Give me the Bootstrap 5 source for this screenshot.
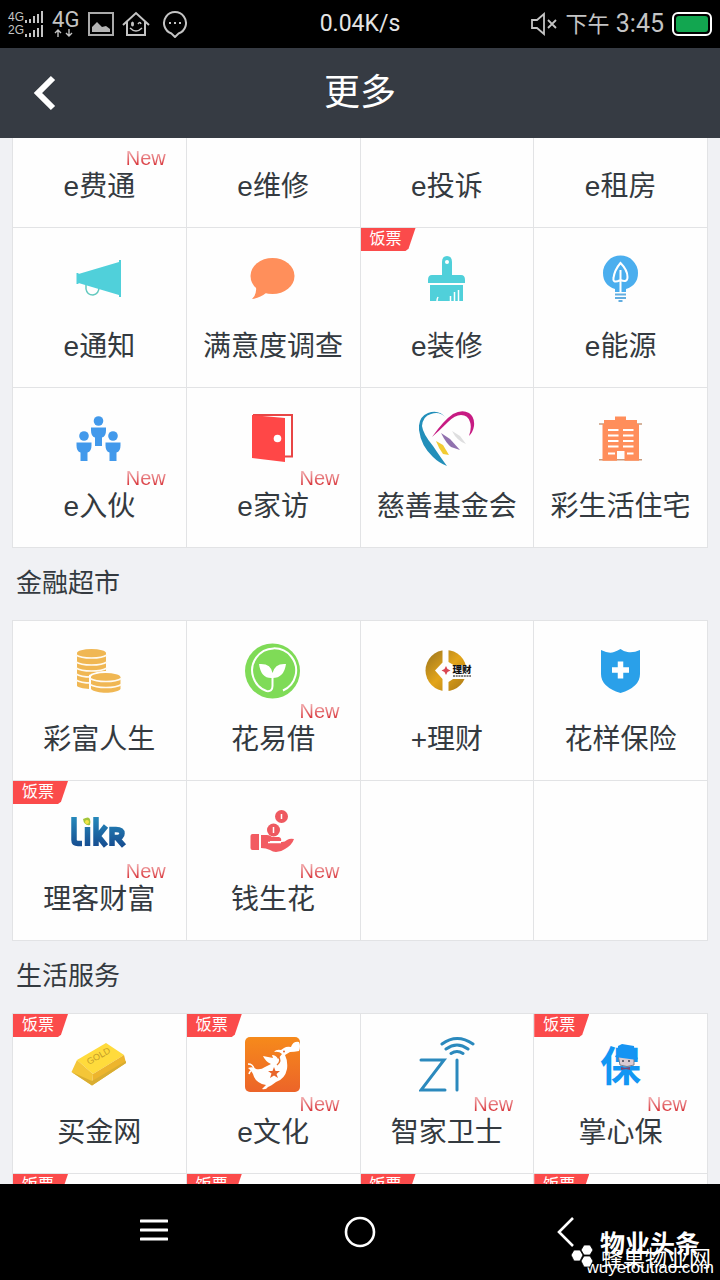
<!DOCTYPE html>
<html lang="zh-CN">
<head>
<meta charset="utf-8">
<meta name="viewport" content="width=device-width, initial-scale=1">
<title>更多</title>
<link href="https://cdn.jsdelivr.net/npm/bootstrap@5.3.0/dist/css/bootstrap.min.css" rel="stylesheet">
<style>
body{font-family:"Liberation Sans","Noto Sans CJK SC",sans-serif;background:#f0f1f4;color:#343a40}
svg{display:block;flex:none}
.status{height:48px;background:#000;color:#c4c4c4;font-family:Roboto,"Noto Sans CJK SC",sans-serif;padding:0 8px}
.status .side{flex:1 1 0}
.sig{font-size:12px;line-height:13px;font-family:"Liberation Sans",sans-serif}
.net{font-size:22px;line-height:18px;width:24px;font-family:Roboto,sans-serif}
.speed{font-size:23px;line-height:32px;color:#e4e4e4}
.clock{font-size:25px;line-height:32px}
.clock span{font-size:22px}
.titlebar{height:90px;background:#363b43;color:#fff}
.titlebar h1{font-size:36px;line-height:44px;font-weight:400}
.back{left:32px;top:24px}
.plain{background:none;border:0;padding:0;color:#fff}
.content{min-height:0;padding:0 12px}
.tiles{background:#fefefe;border-right:1px solid #e2e3e5;border-bottom:1px solid #e2e3e5}
.tile{min-height:160px;border-top:1px solid #e2e3e5;border-left:1px solid #e2e3e5;color:#343a40;text-decoration:none;padding-top:22px}
.tile svg{width:56px;height:56px;margin-bottom:21px}
.tile.cut{min-height:89px;border-top:0;padding-top:29px}
.tile-name{font-size:28px;line-height:40px;white-space:nowrap}
.fresh{right:20px;bottom:58px;font-size:20px;line-height:22px;background:linear-gradient(#f3b4b6 15%,#d9393e 80%);-webkit-background-clip:text;background-clip:text;color:transparent}
.ticket{left:0;top:0;width:55px;height:23px;background:#fb4b4b;color:#fff;font-size:16px;line-height:22px;padding-left:9px;clip-path:polygon(0 0,100% 0,48px 90%,45px 100%,0 100%)}
.group-name{font-size:26px;line-height:36px;padding:17px 4px 19px;margin:0;font-weight:400}
.softkeys{height:96px;background:#000}
.softkeys .plain{width:206px}
.stamp{right:6px;bottom:10px;color:#fff;text-align:right;pointer-events:none}
.stamp b{font-size:25px;line-height:16px;display:block;padding-right:14px}
.stamp span{font-size:22px;display:block;line-height:14px;padding-right:3px}
.stamp small{font-size:17px;display:block;line-height:4px;font-weight:400}
.stamp svg{right:120px;top:8px}
</style>
</head>
<body class="vh-100 d-flex flex-column overflow-hidden">
<div class="status d-flex align-items-center flex-shrink-0">
  <div class="side d-flex align-items-center">
    <div class="sig"><div>4G</div><div>2G</div></div>
    <svg width="20" height="26" viewBox="0 0 20 26" stroke="#c4c4c4" stroke-width="2"><path d="M2 12V9M6 12V8M10 12V5M14 12V3M18 12V0M2 26v-3M6 26v-4M10 26v-7M14 26v-9M18 26V14"/></svg>
    <div class="net ms-2 me-2"><div>4G</div><svg width="22" height="8" viewBox="0 0 22 8" fill="none" stroke="#c4c4c4" stroke-width="1.4"><path d="M6 8V1M3 4l3-3 3 3M17 0v7M14 4l3 3 3-3"/></svg></div>
    <svg class="ms-1" width="26" height="24" viewBox="0 0 26 24"><path d="M1 1h24v22H1z" fill="none" stroke="#aaa" stroke-width="2"/><path d="M4 20v-5l5-5 5 5 4-1 4 3v3z" fill="#b4b4b4"/></svg>
    <svg class="ms-2" width="28" height="26" viewBox="0 0 28 26" fill="none" stroke="#c4c4c4" stroke-width="2"><path d="M1 14 14 2l13 12M5 11v13h18V11"/><path d="M8 17q6 6 12 0M16 13q2-3 3 0" stroke-width="1.5"/><ellipse cx="10.500" cy="13" rx="1.500" ry="2.500" fill="#c4c4c4" stroke="none"/></svg>
    <svg class="ms-2 ps-1" width="30" height="28" viewBox="0 0 26 28" fill="none" stroke="#c4c4c4" stroke-width="2"><path d="M9.500 23.500a11 11 0 1 1 7 0L13 27z"/><path d="M7 13h2M12 13h2M17 13h2"/></svg>
  </div>
  <div class="speed">0.04K/s</div>
  <div class="side d-flex align-items-center justify-content-end">
    <svg width="27" height="24" viewBox="0 0 27 24" fill="none" stroke="#c4c4c4" stroke-width="1.800"><path d="M1 8h5l7-6v20l-7-6H1zM17 8l8 8M25 8l-8 8"/></svg>
    <div class="clock ms-2 me-2"><span>下午</span> 3:45</div>
    <svg width="40" height="24" viewBox="0 0 40 24"><rect x="1" y="1" width="38" height="22" rx="5" fill="#000" stroke="#fff" stroke-width="2"/><rect x="4" y="4" width="32" height="16" rx="3" fill="#12a650"/></svg>
  </div>
</div>
<header class="titlebar position-relative d-flex align-items-center justify-content-center flex-shrink-0">
  <button class="plain back position-absolute" aria-label="返回"><svg width="28" height="42" viewBox="0 0 28 42"><path d="M21 6 6 21l15 15" fill="none" stroke="#fff" stroke-width="6"/></svg></button>
  <h1 class="m-0">更多</h1>
</header>
<main class="content flex-grow-1 overflow-hidden">
  <div class="tiles row g-0">
    <a href="#" class="tile cut col-3 position-relative text-center"><span class="fresh position-absolute">New</span><span class="tile-name">e费通</span></a>
    <a href="#" class="tile cut col-3 text-center"><span class="tile-name">e维修</span></a>
    <a href="#" class="tile cut col-3 text-center"><span class="tile-name">e投诉</span></a>
    <a href="#" class="tile cut col-3 text-center"><span class="tile-name">e租房</span></a>

    <a href="#" class="tile col-3 d-flex flex-column align-items-center"><svg viewBox="0 0 56 56"><path d="M15 35v4q1 6 7 6 6-1 6-8" fill="none" stroke="#62c9bf" stroke-width="1.500"/><path d="M5.500 23h2v1L48 12v-2h2v37h-2v-2L7.500 33v1h-2z" fill="#50d0da"/></svg><span class="tile-name">e通知</span></a>
    <a href="#" class="tile col-3 d-flex flex-column align-items-center"><svg viewBox="0 0 56 56" fill="#ff8f5b"><ellipse cx="27.500" cy="26" rx="22" ry="18"/><path d="M11 37q1 7-4 12 8-1 14-6z"/></svg><span class="tile-name">满意度调查</span></a>
    <a href="#" class="tile col-3 position-relative d-flex flex-column align-items-center"><span class="ticket position-absolute">饭票</span><svg viewBox="0 0 56 56"><path d="M23 25V12q0-6 5-6t5 6v13h9q4 0 4 5v3H9v-3q0-5 4-5zM11 35h33v16H11z" fill="#50d0da"/><circle cx="28" cy="12" r="2" fill="#fff"/><path d="M18 51q0-2 1-4M31.500 51v-5M35.500 51v-9M39.500 51V40" stroke="#fff" stroke-width="1.500" fill="none"/></svg><span class="tile-name">e装修</span></a>
    <a href="#" class="tile col-3 d-flex flex-column align-items-center"><svg viewBox="0 0 56 56"><path d="M22 39q-12-4-12-16a17.500 17.500 0 0 1 35 0q0 12-12 16v3H22z" fill="#4baeee"/><path d="M22 44.500h11M22 48h11M25.500 51h4" stroke="#62ade0" stroke-width="2"/><path d="M27.500 43V20M27.500 30q-8 4-7-2 1-8 7-15 7 7 7 14 0 6-7 3" fill="none" stroke="#fff" stroke-width="2"/></svg><span class="tile-name">e能源</span></a>

    <a href="#" class="tile col-3 position-relative d-flex flex-column align-items-center"><svg viewBox="0 0 56 56" fill="#4299eb"><g id="person"><circle cx="27.500" cy="11" r="4.800"/><path d="M20 17.500h15v3q0 6-4 7V36h-7v-8.500q-4-1-4-7z"/></g><use href="#person" x="-14.500" y="15"/><use href="#person" x="14.500" y="15"/></svg><span class="fresh position-absolute">New</span><span class="tile-name">e入伙</span></a>
    <a href="#" class="tile col-3 position-relative d-flex flex-column align-items-center"><svg viewBox="0 0 56 56"><path d="M8 5h39v41.500H38" fill="none" stroke="#e84545" stroke-width="2"/><path d="M7 5l33 3v44L7 48z" fill="#ff4747"/><circle cx="32.500" cy="28.500" r="3.800" fill="#fff"/></svg><span class="fresh position-absolute">New</span><span class="tile-name">e家访</span></a>
    <a href="#" class="tile col-3 d-flex flex-column align-items-center"><svg viewBox="0 0 56 56"><path d="M27 8Q20-1 9 3-1 7 0 20q2 16 14 27 6 6 14 9-6-8-14-20Q4 24 3 16 4 6 12 4q9-3 15 4z" fill="#238fba"/><path d="M13 27Q25 10 34 4q9-5 16-1 6 4 5 13-1 6-5 10 3-9 1-14-2-7-9-7-6 0-13 7-8 8-16 15z" fill="#c71b83"/><path d="m22 23 9 6 10 11-9-3q-5-4-10-14z" fill="#9071ae"/><path d="m17 31 7 4 6 10-6-1q-4-5-7-13z" fill="#f2cb32"/><path d="m33 21 8 5 6 8q-9-3-14-13z" fill="#dededf"/></svg><span class="tile-name">慈善基金会</span></a>
    <a href="#" class="tile col-3 d-flex flex-column align-items-center"><svg viewBox="0 0 56 56"><path d="M6 14h43M6 49.700h43" stroke="#c89a7c" stroke-width="1.500"/><path d="M9.500 14H11v-4h11V6.500h11V10h11v4h2v36.700H31.500V41H24v9.700H9.500z" fill="#ff8e5b"/><path d="M15 20h10.500M30 20h10.500M15 25.500h10.500M30 25.500h10.500M15 31h10.500M30 31h10.500M15 36.500h10.500M30 36.500h10.500M15 43.500h7M34 43.500h6.500" stroke="#fff" stroke-width="2"/></svg><span class="tile-name">彩生活住宅</span></a>
  </div>

  <h2 class="group-name">金融超市</h2>
  <div class="tiles row g-0">
    <a href="#" class="tile col-3 d-flex flex-column align-items-center"><svg viewBox="0 0 56 56"><path d="M6 10v33c4 4 25 4 29 0V10" fill="#f0b753"/><ellipse cx="20.500" cy="10" rx="14.500" ry="4" fill="#f0b753"/><path d="M5 12c6 4 25 4 31 0M5 19c6 4 25 4 31 0M5 25c6 4 25 4 31 0M5 31c6 4 25 4 31 0M5 37c6 4 25 4 31 0" stroke="#fffaf0" stroke-width="1.700" fill="none"/><path d="M18 32q16-8 33 0v21H18z" fill="#fefefe"/><path d="M20 34v12c5 5 25 5 29.500 0V34" fill="#f0b753"/><ellipse cx="34.700" cy="34" rx="14.700" ry="4" fill="#f0b753"/><path d="M19 35.500c7 4 25 4 31.500 0M19 41.500c7 4 25 4 31.500 0" stroke="#fffaf0" stroke-width="1.700" fill="none"/></svg><span class="tile-name">彩富人生</span></a>
    <a href="#" class="tile col-3 position-relative d-flex flex-column align-items-center"><svg viewBox="0 0 56 56"><circle cx="27.500" cy="28" r="27.500" fill="#7fdb57"/><path d="M27.500 33v10q0 6-6 5A22 22 0 1 1 38 47.500" fill="none" stroke="#fff" stroke-width="2"/><path d="M27.500 35Q16 36 14 21q12-1 13.500 9Q30 20 41 21q-2 14-13.500 14z" fill="#fff"/></svg><span class="fresh position-absolute">New</span><span class="tile-name">花易借</span></a>
    <a href="#" class="tile col-3 d-flex flex-column align-items-center"><svg viewBox="0 0 56 56"><defs><linearGradient id="gold" x1="0" y1="0" x2="1" y2="1"><stop offset="0" stop-color="#98731f"/><stop offset=".5" stop-color="#e3a51a"/><stop offset="1" stop-color="#a87716"/></linearGradient></defs><circle cx="27" cy="27.500" r="20.500" fill="url(#gold)"/><path d="M23.500 6h6v13l5 3H53v14H34l-4.500 3v10h-6V36L16 27.500l7.500-8z" fill="#fefefe"/><path d="m27 23 1.500 3 3 1.500-3 1.500-1.500 3-1.500-3-3-1.500 3-1.500z" fill="#d94552"/><text x="33.500" y="29.500" font-family="Noto Sans CJK SC" font-size="9.500" font-weight="900" fill="#111">理财</text><path d="M34 33h18" stroke="#555" stroke-width="1.500" stroke-dasharray="2 .7"/></svg><span class="tile-name">+理财</span></a>
    <a href="#" class="tile col-3 d-flex flex-column align-items-center"><svg viewBox="0 0 56 56"><path d="M8 7q8 4 13 2 3-1 6.500-3 4 3 7 3 6 1 12.500-2v24q0 13-19.500 19Q8 44 8 31z" fill="#2aa0e9"/><path d="M27.500 18.500v17M19 27h17" stroke="#fff" stroke-width="5.500"/></svg><span class="tile-name">花样保险</span></a>

    <a href="#" class="tile col-3 position-relative d-flex flex-column align-items-center"><span class="ticket position-absolute">饭票</span><svg viewBox="0 0 56 56"><defs><linearGradient id="sea" gradientUnits="userSpaceOnUse" x1="0" y1="14" x2="0" y2="43"><stop offset="0" stop-color="#2589bb"/><stop offset="1" stop-color="#174e91"/></linearGradient></defs><path d="M3 14v23q0 3.500 4 3.500h4M16.500 24v19M25 14v29M35 23l-8 10 8 10M41 43V26.500h4q6 0 6 4t-6 4h-4M46 35l7 8" fill="none" stroke="url(#sea)" stroke-width="5.500"/><path d="M12 16q9-5 7 6-6 1-7-6z" fill="#a4c53a"/><circle cx="16" cy="19" r="2" fill="#f4e545"/></svg><span class="fresh position-absolute">New</span><span class="tile-name">理客财富</span></a>
    <a href="#" class="tile col-3 position-relative d-flex flex-column align-items-center"><svg viewBox="0 0 56 56"><path d="M5.500 33q0-2 2-2H14v16H7.500q-2 0-2-2zM16 32h6q3 0 5 2h7q3 1 2 4H25v1h12q3 0 5-2 3-2 7-1-2 6-9 10-4 3-9 3-3 0-6-2-4-2-9-2z" fill="#f25b62"/><circle cx="36.500" cy="13.500" r="6.500" fill="#ee5960"/><circle cx="28.500" cy="27" r="6.500" fill="#ee5960"/><path d="M36.500 11v5M28.500 24v6" stroke="#fff" stroke-width="1.500"/><path d="M23 39.500h13" stroke="#fff" stroke-width="1.500"/></svg><span class="fresh position-absolute">New</span><span class="tile-name">钱生花</span></a>
    <div class="tile col-3"></div>
    <div class="tile col-3"></div>
  </div>

  <h2 class="group-name">生活服务</h2>
  <div class="tiles row g-0">
    <a href="#" class="tile col-3 position-relative d-flex flex-column align-items-center"><span class="ticket position-absolute">饭票</span><svg viewBox="0 0 56 56"><path d="m6 24 29-17 18 12-31 19z" fill="#ffdb3c"/><path d="m6 24 16 14-1 11.500L.5 36z" fill="#f4c638"/><path d="m22 38 31-19 2 8-34 22.500z" fill="#edb52d"/><path d="m.5 36 20.500 9 34-20v2L21 49.500z" fill="#d9ad31"/><text x="0" y="0" transform="translate(18 29) rotate(-30)" font-family="Liberation Sans" font-size="9" fill="#c59d29">GOLD</text></svg><span class="tile-name">买金网</span></a>
    <a href="#" class="tile col-3 position-relative d-flex flex-column align-items-center"><span class="ticket position-absolute">饭票</span><svg viewBox="0 0 56 56"><defs><linearGradient id="sun" x2="0" y2="1"><stop offset="0" stop-color="#f68a1b"/><stop offset="1" stop-color="#ec6429"/></linearGradient></defs><rect y="1" width="55" height="55" rx="5" fill="url(#sun)"/><path d="M3 32q5-2 8 1 5 1 9-2l6-3q-6-3-8-8l10 2-1-3q4 0 6 4l4-5q-3-3-8-2 2-3 7-2l3-2q3-2 7-1 2-6 8-5 2 4 0 9-5 1-9 1l-5 3q3 6 2 14-2 10-11 13-5 4-8 5-2 3-6 2l4-4q-11-2-13-11-2-4-5-6z" fill="#fff"/><path d="M3 28q5 0 6 5M4 38q1-4 5-4" fill="none" stroke="#fff" stroke-width="1.500"/><path d="m29 31 1.500 4 4.500 0-3.500 3 1.500 4-4-2.500L25 42l1.500-4.500L23 35h4.500z" fill="#e8652b"/><path d="M33 20q4 5-1 9" fill="none" stroke="#e8752b" stroke-width="1.500"/><circle cx="39" cy="15.500" r="1" fill="#e8652b"/></svg><span class="fresh position-absolute">New</span><span class="tile-name">e文化</span></a>
    <a href="#" class="tile col-3 position-relative d-flex flex-column align-items-center"><svg viewBox="0 0 56 56" fill="none" stroke="#2b89bd" stroke-width="3" stroke-linecap="round"><path d="M2 24h23L2 54h24M38 24v30"/><path d="M23 8q15-11 31 0M27 13q11-8 22 0M32 17.500q6-4 12 0"/></svg><span class="fresh position-absolute">New</span><span class="tile-name">智家卫士</span></a>
    <a href="#" class="tile col-3 position-relative d-flex flex-column align-items-center"><span class="ticket position-absolute">饭票</span><svg viewBox="0 0 56 56"><text x="7" y="45" font-family="Noto Sans CJK SC" font-size="41" font-weight="700" fill="#1296f3">保</text><path d="M25 19h16v10q-7 3-14 0z" fill="#dacbd2" stroke="#788190"/><path d="m25 10 4-2 12 2 1 10 3 2-1 2-22-3 1-2h2z" fill="#1694f3"/><circle cx="30" cy="25" r="1" fill="#445"/><circle cx="36" cy="25" r="1" fill="#445"/><path d="m28 31 4 1 5-1v3l-4-1-5 1z" fill="#7a4672"/></svg><span class="fresh position-absolute">New</span><span class="tile-name">掌心保</span></a>

    <a href="#" class="tile col-3 position-relative"><span class="ticket position-absolute">饭票</span></a>
    <a href="#" class="tile col-3 position-relative"><span class="ticket position-absolute">饭票</span></a>
    <a href="#" class="tile col-3 position-relative"><span class="ticket position-absolute">饭票</span></a>
    <a href="#" class="tile col-3 position-relative"><span class="ticket position-absolute">饭票</span></a>
  </div>
</main>
<nav class="softkeys position-relative d-flex align-items-center justify-content-center flex-shrink-0">
  <button class="plain d-flex justify-content-center" aria-label="菜单"><svg width="28" height="32" viewBox="0 0 28 32"><path d="M1 5h26M1 14h26M1 23h26" stroke="#fff" stroke-width="3" stroke-linecap="round"/></svg></button>
  <button class="plain d-flex justify-content-center" aria-label="主页"><svg width="32" height="32" viewBox="0 0 32 32"><circle cx="16" cy="16" r="14" fill="none" stroke="#fff" stroke-width="2.600"/></svg></button>
  <button class="plain d-flex justify-content-center" aria-label="返回"><svg width="18" height="32" viewBox="0 0 18 32"><path d="M16 2 2 16l14 14" fill="none" stroke="#fff" stroke-width="2.600"/></svg></button>
  <div class="stamp position-absolute"><svg class="position-absolute" width="24" height="24" viewBox="0 0 24 24" fill="#fff" stroke="#000" stroke-width=".8"><path d="m4 6h6l3 5-3 6H4l-3-6zM14 1h6l3 5-3 5h-6l-3-5zM14 12h6l3 5-3 6h-6l-3-6z"/></svg><b>物业头条</b><span>蜂巢物业网</span><small>wuyetoutiao.com</small></div>
</nav>
<script src="https://cdn.jsdelivr.net/npm/bootstrap@5.3.0/dist/js/bootstrap.bundle.min.js"></script>
</body>
</html>
